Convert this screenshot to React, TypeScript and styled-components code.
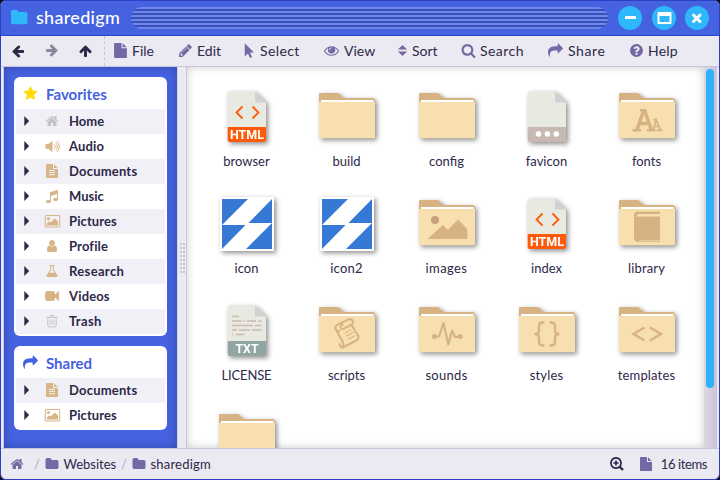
import React from 'react';
import styled, { createGlobalStyle } from 'styled-components';

const GlobalStyle = createGlobalStyle`
  * { box-sizing: border-box; }
  body { margin: 0; background: #0d1026; font-family: Lato, "Liberation Sans", sans-serif; color: #2e2849; }
`;

/* ---------- icons ---------- */

const GLYPHS = {
  folder: 'M1728 608v704q0 92-66 158t-158 66h-1216q-92 0-158-66t-66-158v-960q0-92 66-158t158-66h320q92 0 158 66t66 158v32h672q92 0 158 66t66 158z',
  file: 'M1152 512v-472q22 14 36 28l408 408q14 14 28 36h-472zm-128 32q0 40 28 68t68 28h544v1056q0 40-28 68t-68 28h-1344q-40 0-68-28t-28-68v-1600q0-40 28-68t68-28h800v544z',
  document: 'M1596 476q14 14 28 36h-472v-472q22 14 36 28zm-476 164h544v1056q0 40-28 68t-68 28h-1344q-40 0-68-28t-28-68v-1600q0-40 28-68t68-28h800v544q0 40 28 68t68 28zm160 776v-100q0-20-32-20h-704q-32 0-32 20v100q0 20 32 20h704q32 0 32-20zm0-270v-100q0-20-32-20h-704q-32 0-32 20v100q0 20 32 20h704q32 0 32-20zm0-270v-100q0-20-32-20h-704q-32 0-32 20v100q0 20 32 20h704q32 0 32-20z',
  share: 'M1792 640q0 26-19 45l-512 512q-19 19-45 19t-45-19-19-45v-256h-224q-98 0-175.5 6t-154 21.5-133 42.5-105.5 69.5-80 101-48.5 138.5-17.5 181q0 55 5 123 0 6 2.5 23.5t2.5 26.5q0 15-8.5 25t-23.5 10q-16 0-28-17-7-9-13-22t-13.5-30-10.5-24q-127-285-127-451 0-199 53-333 162-403 875-403h224v-256q0-26 19-45t45-19 45 19l512 512q19 19 19 45z',
  home: 'M1472 992v480q0 26-19 45t-45 19h-384v-384h-256v384h-384q-26 0-45-19t-19-45v-480q0-1 .5-3t.5-3l575-474 575 474q1 2 1 6zm223-69l-62 74q-8 9-21 11h-3q-13 0-21-7l-692-577-692 577q-12 8-24 7-13-2-21-11l-62-74q-8-10-7-23.5t11-21.5l719-599q32-26 76-26t76 26l244 204v-195q0-14 9-23t23-9h192q14 0 23 9t9 23v408l219 182q10 8 11 21.5t-7 23.5z',
  arrow: 'M1664 896v128q0 53-32.5 90.5t-84.5 37.5h-704l293 294q38 36 38 90t-38 90l-75 76q-37 37-90 37-52 0-91-37l-651-652q-37-37-37-90 0-52 37-91l651-650q38-38 91-38 52 0 90 38l75 74q38 38 38 91t-38 91l-293 293h704q52 0 84.5 37.5t32.5 90.5z',
  eye: 'M1664 960q-152-236-381-353 61 104 61 225 0 185-131.5 316.5t-316.5 131.5-316.5-131.5-131.5-316.5q0-121 61-225-229 117-381 353 133 205 333.5 326.5t434.5 121.5 434.5-121.5 333.5-326.5zm-720-384q0-20-14-34t-34-14q-125 0-214.5 89.5t-89.5 214.5q0 20 14 34t34 14 34-14 14-34q0-86 61-147t147-61q20 0 34-14t14-34zm848 384q0 34-20 69-140 230-376.5 368.5t-499.5 138.5-499.5-139-376.5-368q-20-35-20-69t20-69q140-229 376.5-368t499.5-139 499.5 139 376.5 368q20 35 20 69z',
  pencil: 'M491 1536l91-91-235-235-91 91v107h128v128h107zm523-928q0-22-22-22-10 0-17 7l-542 542q-7 7-7 17 0 22 22 22 10 0 17-7l542-542q7-7 7-17zm-54-192l416 416-832 832h-416v-416zm683 96q0 53-37 90l-166 166-416-416 166-165q36-38 90-38 53 0 91 38l235 234q37 39 37 91z',
  search: 'M1216 832q0-185-131.5-316.5t-316.5-131.5-316.5 131.5-131.5 316.5 131.5 316.5 316.5 131.5 316.5-131.5 131.5-316.5zm512 832q0 52-38 90t-90 38q-54 0-90-38l-343-342q-179 124-399 124-143 0-273.5-55.5t-225-150-150-225-55.5-273.5 55.5-273.5 150-225 225-150 273.5-55.5 273.5 55.5 225 150 150 225 55.5 273.5q0 220-124 399l343 343q37 37 37 90z',
  picture: 'M576 576q0 80-56 136t-136 56-136-56-56-136 56-136 136-56 136 56 56 136zm1024 384v448h-1408v-192l320-320 160 160 512-512zm96-704h-1600q-13 0-22.5 9.5t-9.5 22.5v1216q0 13 9.5 22.5t22.5 9.5h1600q13 0 22.5-9.5t9.5-22.5v-1216q0-13-9.5-22.5t-22.5-9.5zm160 32v1216q0 66-47 113t-113 47h-1600q-66 0-113-47t-47-113v-1216q0-66 47-113t113-47h1600q66 0 113 47t47 113z',
  star: 'M1728 647q0 22-26 48l-363 354 86 500q1 7 1 20 0 21-10.5 35.5t-30.5 14.5q-19 0-40-12l-449-236-449 236q-22 12-40 12-21 0-31.5-14.5t-10.5-35.5q0-6 2-20l86-500-364-354q-25-27-25-48 0-37 56-46l502-73 225-455q19-41 49-41t49 41l225 455 502 73q56 9 56 46z',
  video: 'M1792 352v1088q0 42-39 59-13 5-25 5-27 0-45-19l-403-403v166q0 119-84.5 203.5t-203.5 84.5h-704q-119 0-203.5-84.5t-84.5-203.5v-704q0-119 84.5-203.5t203.5-84.5h704q119 0 203.5 84.5t84.5 203.5v165l403-402q18-19 45-19 12 0 25 5 39 17 39 59z',
  user: 'M1536 1399q0 109-62.5 187t-150.5 78h-854q-88 0-150.5-78t-62.5-187q0-85 8.5-160.5t31.5-152 58.5-131 94-89 134.5-34.5q131 128 313 128t313-128q76 0 134.5 34.5t94 89 58.5 131 31.5 152 8.5 160.5zm-256-887q0 159-112.5 271.5t-271.5 112.5-271.5-112.5-112.5-271.5 112.5-271.5 271.5-112.5 271.5 112.5 112.5 271.5z',
  music: 'M1664 224v1120q0 50-34 89t-86 60.5-103.5 32-96.5 10.5-96.5-10.5-103.5-32-86-60.5-34-89 34-89 86-60.5 103.5-32 96.5-10.5q105 0 192 39v-537l-768 237v709q0 50-34 89t-86 60.5-103.5 32-96.5 10.5-96.5-10.5-103.5-32-86-60.5-34-89 34-89 86-60.5 103.5-32 96.5-10.5q105 0 192 39v-967q0-31 19-56.5t49-35.5l832-256q12-4 28-4 40 0 68 28t28 68z',
  help: 'M1024 1376v-192q0-14-9-23t-23-9h-192q-14 0-23 9t-9 23v192q0 14 9 23t23 9h192q14 0 23-9t9-23zm256-672q0-88-55.5-163t-138.5-116-170-41q-243 0-371 213-15 24 8 42l132 100q7 6 19 6 16 0 25-12 53-68 86-92 34-24 86-24 48 0 85.5 26t37.5 59q0 38-20 61t-68 45q-63 28-115.5 86.5t-52.5 125.5v36q0 14 9 23t23 9h192q14 0 23-9t9-23q0-19 21.5-49.5t54.5-49.5q32-18 49-28.5t46-35 44.5-48 28-60.5 12.5-81zm384 192q0 209-103 385.5t-279.5 279.5-385.5 103-385.5-103-279.5-279.5-103-385.5 103-385.5 279.5-279.5 385.5-103 385.5 103 279.5 279.5 103 385.5z',
  pointer: 'M330 30L1430 1130H960L1200 1690L950 1792L710 1240L330 1600Z',
  sort: 'M260 770L896 130L1532 770ZM260 1020L896 1660L1532 1020Z',
  flask: 'M600 128H1192V256H1120V704L1590 1450Q1660 1664 1460 1664H332Q132 1664 202 1450L672 704V256H600ZM800 256V740L560 1130H1232L992 740V256Z',
  caret: 'M680 256L1300 896L680 1536Z',
};

type GlyphName = keyof typeof GLYPHS;

const Svg = styled.svg<{ $size: number; $turn?: number }>`
  display: block;
  flex: none;
  width: ${p => p.$size}px;
  height: ${p => p.$size}px;
  overflow: visible;
  fill: currentColor;
  transform: rotate(${p => p.$turn ?? 0}deg);
`;

function Glyph({ name, size = 15, turn }: { name: GlyphName; size?: number; turn?: number }) {
  const box = name === 'picture' ? '-32 0 1792 1792' : '0 0 1792 1792';
  return (
    <Svg $size={size} $turn={turn} viewBox={box}>
      <path fillRule="evenodd" d={GLYPHS[name]} />
    </Svg>
  );
}

function SpeakerIcon() {
  return (
    <Svg $size={15} viewBox="0 0 15 15">
      <path d="M.5 5H3.3L7.5 1.8V13L3.3 9.8H.5Z" />
      <path d="M9.3 5.3a3 3 0 0 1 0 4.4M10.7 3.6a5.4 5.4 0 0 1 0 7.8M12 2a7.6 7.6 0 0 1 0 11" fill="none" stroke="currentColor" strokeWidth="1" />
    </Svg>
  );
}

function TrashIcon() {
  return (
    <Svg $size={14} viewBox="0 0 14 14">
      <path d="M2.800 4.500V11.500q0 1.500 1.200 1.500H10q1.200 0 1.200-1.500V4.500M1.500 3.500H12.500M4.800 3L5.300 1.500H8.700L9.200 3" fill="none" stroke="currentColor" strokeWidth="1" />
      <path d="M5 5.500V11M7 5.500V11M9 5.500V11" fill="none" stroke="currentColor" strokeWidth=".8" />
    </Svg>
  );
}

/* ---------- window frame ---------- */

const Window = styled.div`
  display: flex;
  flex-direction: column;
  width: 720px;
  height: 480px;
  border: 1px solid #2f3fc6;
  border-radius: 6px;
  background: #ebe9f1;
  overflow: hidden;
`;

const TitleBar = styled.header`
  display: flex;
  align-items: center;
  flex: none;
  height: 35px;
  padding: 0 10px;
  background: #4562e0;
  border-bottom: 1px solid #2f3fc6;
  color: #fff;
`;

const TitleIcon = styled.span`
  width: 25px;
  color: #2eb7fb;
`;

const Title = styled.h1`
  width: 95px;
  margin: 0 0 3px;
  font-size: 18px;
  font-weight: 500;
  line-height: 20px;
  letter-spacing: 0.3px;
`;

const Grip = styled.div`
  flex: 1;
  height: 22px;
  margin-right: 10px;
  border-radius: 11px;
  background: repeating-linear-gradient(#7089e9 0 2px, #3850bd 2px 4px);
`;

const WindowButtons = styled.div`
  display: flex;
  gap: 9.5px;
`;

const RoundButton = styled.button`
  width: 24px;
  height: 24px;
  padding: 0;
  border: 0;
  border-radius: 50%;
  background: #2eb7fb;
`;

/* ---------- toolbar ---------- */

const Toolbar = styled.nav`
  display: flex;
  align-items: stretch;
  flex: none;
  height: 31px;
  border-bottom: 1px solid #c9c4df;
`;

const NavButtons = styled.div`
  display: flex;
  align-items: center;
  width: 104px;
  padding-left: 10px;
  gap: 20px;
  border-right: 1px dashed #c9c4df;
`;

const NavButton = styled.span<{ $dim?: boolean }>`
  width: 14px;
  color: #2e2849;
  opacity: ${p => (p.$dim ? 0.5 : 1)};
`;

const Menu = styled.div`
  display: flex;
  margin-left: 7px;
`;

const MenuButton = styled.span<{ $width: number; $gap: number; $tracking?: number }>`
  display: flex;
  align-items: center;
  gap: ${p => p.$gap}px;
  width: ${p => p.$width}px;
  padding-bottom: 1px;
  font-size: 14px;
  letter-spacing: ${p => p.$tracking ?? 0}px;
  white-space: nowrap;
`;

const MenuIcon = styled.span`
  display: flex;
  justify-content: center;
  width: 16px;
  color: #7569a5;
`;

const menu: { icon: GlyphName; label: string; width: number; gap: number; size?: number; tracking?: number }[] = [
  { icon: 'file', label: 'File', width: 65, gap: 4 },
  { icon: 'pencil', label: 'Edit', width: 64, gap: 4 },
  { icon: 'pointer', label: 'Select', width: 82, gap: 3, tracking: 0.4 },
  { icon: 'eye', label: 'View', width: 71, gap: 5 },
  { icon: 'sort', label: 'Sort', width: 66, gap: 2, size: 13 },
  { icon: 'search', label: 'Search', width: 87, gap: 4, tracking: 0.45 },
  { icon: 'share', label: 'Share', width: 81, gap: 5, tracking: 0.6 },
  { icon: 'help', label: 'Help', width: 60, gap: 4, tracking: 0.2 },
];

/* ---------- sidebar ---------- */

const Body = styled.main`
  display: flex;
  flex: none;
  height: 381px;
  margin: 0 2px;
  border-left: 1px solid #c9c4df;
  border-right: 1px solid #c9c4df;
`;

const Sidebar = styled.aside`
  display: flex;
  flex-direction: column;
  gap: 10px;
  width: 173px;
  padding: 10px;
  background: #4562e0;
  box-shadow: inset 0 0 10px rgba(0, 0, 0, 0.25);
`;

const Panel = styled.section`
  padding: 0 2px 2px;
  border-radius: 6px;
  background: #fff;
`;

const PanelHeader = styled.h2<{ $accent: string }>`
  display: flex;
  align-items: center;
  gap: 8px;
  height: 32px;
  margin: 0;
  padding: 1px 0 0 7px;
  font-size: 15px;
  font-weight: 700;
  color: #4562e0;
  svg { color: ${p => p.$accent}; }
`;

const SideRow = styled.div<{ $tracking?: number }>`
  display: flex;
  align-items: center;
  height: 25px;
  padding: 0 0 1px 3px;
  font-size: 13px;
  font-weight: 700;
  letter-spacing: ${p => p.$tracking ?? 0}px;
  &:nth-child(even) { background: #f1f0f6; }
`;

const SideIcon = styled.span<{ $muted?: boolean }>`
  display: flex;
  justify-content: center;
  width: 34px;
  color: ${p => (p.$muted ? '#c3c2c4' : '#d8b586')};
`;

const Caret = styled.span`
  width: 16px;
`;

type Side = { label: string; icon: React.ReactNode; muted?: boolean; tracking?: number };

const favorites: Side[] = [
  { label: 'Home', icon: <Glyph name="home" size={14} />, muted: true },
  { label: 'Audio', icon: <SpeakerIcon />, tracking: 0.15 },
  { label: 'Documents', icon: <Glyph name="document" size={14} />, tracking: 0.2 },
  { label: 'Music', icon: <Glyph name="music" size={14} /> },
  { label: 'Pictures', icon: <Glyph name="picture" size={14.5} />, tracking: 0.1 },
  { label: 'Profile', icon: <Glyph name="user" size={14} />, tracking: 0.15 },
  { label: 'Research', icon: <Glyph name="flask" size={14} />, tracking: 0.35 },
  { label: 'Videos', icon: <Glyph name="video" size={14} />, tracking: 0.15 },
  { label: 'Trash', icon: <TrashIcon />, muted: true, tracking: 0.35 },
];

const shared: Side[] = [favorites[2], favorites[4]];

function SideList({ title, icon, accent, rows }: { title: string; icon: GlyphName; accent: string; rows: Side[] }) {
  return (
    <Panel>
      <PanelHeader $accent={accent}>
        <Glyph name={icon} size={15} />
        {title}
      </PanelHeader>
      {rows.map(r => (
        <SideRow key={r.label} $tracking={r.tracking}>
          <Caret><Glyph name="caret" size={14} /></Caret>
          <SideIcon $muted={r.muted}>{r.icon}</SideIcon>
          {r.label}
        </SideRow>
      ))}
    </Panel>
  );
}

const Splitter = styled.div`
  display: flex;
  align-items: center;
  justify-content: center;
  width: 10px;
  border-left: 1px solid #d9d6e6;
  border-right: 1px solid #c9c4df;
  background: #ebe9f1;
`;

const SplitterDots = styled.span`
  width: 5px;
  height: 30px;
  background:
    repeating-linear-gradient(90deg, transparent 0 2px, #ebe9f1 2px 3px),
    repeating-linear-gradient(#c6c4cf 0 2px, #ebe9f1 2px 4px);
`;

/* ---------- file grid ---------- */

const Content = styled.div`
  flex: 1;
  padding: 10px 0 0 10px;
  background: #fff;
  overflow: hidden;
  box-shadow: inset 0 0 10px rgba(0, 0, 0, 0.2);
`;

const FileGrid = styled.div`
  display: grid;
  grid-template-columns: repeat(5, 100px);
  grid-auto-rows: 107px;
`;

const FileCell = styled.figure`
  display: flex;
  flex-direction: column;
  align-items: center;
  margin: 0;
  padding-top: 8px;
`;

const FileArt = styled.svg`
  display: block;
  width: 64px;
  height: 64px;
  overflow: visible;
  filter: drop-shadow(2px 2px 2.5px rgba(0, 0, 0, 0.45));
`;

const FileName = styled.figcaption<{ $tracking?: number }>`
  margin-top: 3px;
  padding-right: 1px;
  font-size: 13px;
  line-height: 18px;
  letter-spacing: ${p => p.$tracking ?? 0}px;
`;

const BadgeText = styled.text`
  font: 700 12px Roboto, sans-serif;
  fill: #fff;
  text-anchor: middle;
`;

function Folder({ children }: { children?: React.ReactNode }) {
  return (
    <FileArt viewBox="0 0 64 64">
      <path d="M4 10.500V9Q4 8 5 8H22.500Q23.400 8 24.200 8.700L28.500 13H57.500Q60 13 60 16V20H4Z" fill="#d7b384" />
      <rect x="6" y="15" width="52.500" height="5" fill="#fff" />
      <path d="M4 17H60V52Q60 53.200 58.800 53.200H5.200Q4 53.200 4 52Z" fill="#f8dfaf" />
      {children}
    </FileArt>
  );
}

function Page({ band, children }: { band: string; children?: React.ReactNode }) {
  return (
    <FileArt viewBox="0 0 64 64">
      <path d="M12.700 8.500Q12.700 6.500 14.700 6.500H40L51 17.500V55Q51 57 49 57H14.700Q12.700 57 12.700 55Z" fill="#e8eae1" />
      <path d="M40 6.500L51 17.500H40Z" fill="#d0d1d0" />
      <path d="M12.700 42H51V55Q51 57 49 57H14.700Q12.700 57 12.700 55Z" fill={band} />
      {children}
    </FileArt>
  );
}

const TAN = '#d7b384';

function HtmlFile() {
  return (
    <Page band="#ff5a09">
      <path d="M27.500 21.500L21.500 27.500L27.500 33.500M37.500 21.500L43.500 27.500L37.500 33.500" fill="none" stroke="#ff5a09" strokeWidth="1.800" />
      <BadgeText x="31.900" y="53.800" textLength="34" lengthAdjust="spacingAndGlyphs">HTML</BadgeText>
    </Page>
  );
}

function BoltImage() {
  return (
    <FileArt viewBox="0 0 64 64">
      <rect x="5" y="5" width="54" height="54" fill="#fff" />
      <rect x="7" y="7" width="50" height="50" fill="#3579d4" />
      <path d="M33 7H57L33.500 31H57L31 57H7L30.500 33H7Z" fill="#fff" />
    </FileArt>
  );
}

const folderArt: Record<string, React.ReactNode> = {
  fonts: (
    <g fill="none" stroke={TAN}>
      <path d="M22 45L28.300 26.500M29.500 25L36.500 45M24 38.500H34" strokeWidth="3.600" />
      <path d="M17.500 45.200H26M32 45.200H40.500M25 25.200H31.300" strokeWidth="2.400" />
      <path d="M38.300 45.300L41 34.500L45.300 45.300M39 41.500H44M41.500 45.300H47.500M38.500 34.800H42" strokeWidth="1.700" />
    </g>
  ),
  images: (
    <g fill={TAN}>
      <circle cx="20" cy="28" r="4" fill="#c99f7c" />
      <path d="M12.500 47L28 33L33 38L43 27.500L52.300 37V47Z" />
    </g>
  ),
  library: (
    <>
      <path d="M23 19.500H45V22H24Q22.300 22.300 22.300 24H45V50H23Q19 50 19 46V23.500Q19 19.500 23 19.500Z" fill={TAN} />
      <path d="M45 22.800H24Q21.800 22.800 22 24.200H45M45 48.800H24" stroke="#f8dfaf" fill="none" strokeWidth=".8" />
    </>
  ),
  scripts: (
    <g fill="none" stroke={TAN} strokeWidth="2" strokeLinejoin="round" strokeLinecap="round">
      <path d="M24.500 32.300Q20 31.500 20.300 28.500Q20.500 26.500 23 25.300L33.500 20.300Q37 19.500 38 22.500Q38.300 24.700 36.500 25.700L28.300 30Q25.500 30.500 25.500 28Q25.500 26.500 27.500 25.500" />
      <path d="M22 32.500L28 43.500Q29.500 47.500 26.500 48Q24 47.500 25 45M28 48.500L42 41Q44.500 39 43 36.500L37 27" />
      <path d="M30 34L35.500 31M31.500 37L38 33.500M33.500 40L39.500 36.800" strokeWidth="1.200" />
    </g>
  ),
  sounds: (
    <>
      <path d="M20 37.500H24L28.500 24L33.300 45.500L37 31.500L40 38H45" fill="none" stroke={TAN} strokeWidth="2.200" strokeLinejoin="round" />
      <circle cx="19.500" cy="37.500" r="2.500" fill={TAN} />
      <circle cx="45" cy="37.500" r="2.500" fill={TAN} />
    </>
  ),
  styles: (
    <path d="M29.500 23.500H27.500Q24 23.500 24 27V31.500Q24 35 19.500 35Q24 35 24 38.500V43Q24 46.500 27.500 46.500H29.500M34.500 23.500H36.500Q40 23.500 40 27V31.500Q40 35 44.500 35Q40 35 40 38.500V43Q40 46.500 36.500 46.500H34.500" fill="none" stroke={TAN} strokeWidth="2.300" />
  ),
  templates: (
    <path d="M29.500 28.500L18.500 35L29.500 41.500M35 28.500L46 35L35 41.500" fill="none" stroke={TAN} strokeWidth="2.400" />
  ),
};

const specialArt: Record<string, React.ReactNode> = {
  browser: <HtmlFile />,
  index: <HtmlFile />,
  icon: <BoltImage />,
  icon2: <BoltImage />,
  favicon: (
    <Page band="#c8b9b4">
      <g fill="#fff"><circle cx="23.500" cy="49" r="2.800" /><circle cx="32.400" cy="49" r="2.800" /><circle cx="41.300" cy="49" r="2.800" /></g>
    </Page>
  ),
  LICENSE: (
    <Page band="#91a5a3">
      <path d="M17 17.500H24M17 22H27M28.500 22H30.500M32 22H41M43 22H46.500M17 26.500H38M40 26.500H46.500M17 31H22M24 31H35M37 31H46.500M17 35.500H18.500M21 35.500H29.500" fill="none" stroke="#cbb9b3" strokeWidth="1.600" />
      <BadgeText x="32" y="53.800" textLength="23" lengthAdjust="spacingAndGlyphs">TXT</BadgeText>
    </Page>
  ),
};

const files: { name: string; tracking?: number }[] = [
  { name: 'browser' }, { name: 'build' }, { name: 'config' }, { name: 'favicon' }, { name: 'fonts' },
  { name: 'icon' }, { name: 'icon2', tracking: 0.2 }, { name: 'images', tracking: 0.4 }, { name: 'index' }, { name: 'library', tracking: 0.15 },
  { name: 'LICENSE', tracking: -0.15 }, { name: 'scripts' }, { name: 'sounds', tracking: 0.3 }, { name: 'styles', tracking: 0.15 }, { name: 'templates', tracking: 0.15 },
  { name: '' },
];

const ScrollTrack = styled.div`
  width: 12px;
  padding: 2px;
  background: linear-gradient(90deg, #dcd9e6, #c9c5d8);
`;

const ScrollThumb = styled.div`
  width: 8px;
  height: 319px;
  border-radius: 4px;
  background: #2eb3f8;
`;

/* ---------- status bar ---------- */

const StatusBar = styled.footer`
  display: flex;
  align-items: center;
  flex: 1;
  padding: 0 12px 0 9px;
  border-top: 1px solid #c9c4df;
  font-size: 13px;
`;

const Crumb = styled.span<{ $width: number; $tracking?: number }>`
  display: flex;
  align-items: center;
  gap: 4.5px;
  width: ${p => p.$width}px;
  letter-spacing: ${p => p.$tracking ?? 0}px;
  white-space: nowrap;
  svg { color: #7569a5; }
`;

const Slash = styled.span<{ $width: number }>`
  width: ${p => p.$width}px;
  color: #aaa5c4;
`;

const Zoom = styled.span`
  margin-left: auto;
  margin-right: 15px;
`;

const ItemCount = styled.span`
  display: flex;
  align-items: center;
  gap: 8px;
  letter-spacing: -0.4px;
  svg { color: #7569a5; }
`;

export default function App() {
  return (
    <>
      <GlobalStyle />
      <Window>
        <TitleBar>
          <TitleIcon>
            <Svg $size={17} viewBox="0 0 17 17"><path d="M0 1.500Q0 0 1.500 0H5.500Q7 0 7.500 2H14.500Q16.500 2 16.500 4V12.500Q16.500 14.200 14.500 14.200H2Q0 14.200 0 12.500Z" /></Svg>
          </TitleIcon>
          <Title>sharedigm</Title>
          <Grip />
          <WindowButtons>
            <RoundButton>
              <Svg $size={24} viewBox="0 0 24 24"><rect x="7" y="10" width="11" height="3" rx=".5" fill="#fff" /></Svg>
            </RoundButton>
            <RoundButton>
              <Svg $size={24} viewBox="0 0 24 24"><path d="M6.500 6H18.500Q19.500 6 19.500 7V17Q19.500 18 18.500 18H6.500Q5.500 18 5.500 17V7Q5.500 6 6.500 6ZM7.500 10V16H17.500V10Z" fill="#fff" fillRule="evenodd" /></Svg>
            </RoundButton>
            <RoundButton>
              <Svg $size={24} viewBox="0 0 24 24"><path d="M8.500 9L15 15.500M15 9L8.500 15.500" stroke="#fff" strokeWidth="3" strokeLinecap="round" /></Svg>
            </RoundButton>
          </WindowButtons>
        </TitleBar>

        <Toolbar>
          <NavButtons>
            <NavButton><Glyph name="arrow" size={14} /></NavButton>
            <NavButton $dim><Glyph name="arrow" size={14} turn={180} /></NavButton>
            <NavButton><Glyph name="arrow" size={14} turn={90} /></NavButton>
          </NavButtons>
          <Menu>
            {menu.map(m => (
              <MenuButton key={m.label} $width={m.width} $gap={m.gap} $tracking={m.tracking}>
                <MenuIcon><Glyph name={m.icon} size={m.size} /></MenuIcon>
                {m.label}
              </MenuButton>
            ))}
          </Menu>
        </Toolbar>

        <Body>
          <Sidebar>
            <SideList title="Favorites" icon="star" accent="#ffdc0a" rows={favorites} />
            <SideList title="Shared" icon="share" accent="#4562e0" rows={shared} />
          </Sidebar>
          <Splitter><SplitterDots /></Splitter>
          <Content>
            <FileGrid>
              {files.map(f => (
                <FileCell key={f.name}>
                  {specialArt[f.name] ?? <Folder>{folderArt[f.name]}</Folder>}
                  {f.name && <FileName $tracking={f.tracking}>{f.name}</FileName>}
                </FileCell>
              ))}
            </FileGrid>
          </Content>
          <ScrollTrack><ScrollThumb /></ScrollTrack>
        </Body>

        <StatusBar>
          <Crumb $width={24}><Glyph name="home" size={14} /></Crumb>
          <Slash $width={11}>/</Slash>
          <Crumb $width={76}><Glyph name="folder" size={14} />Websites</Crumb>
          <Slash $width={11}>/</Slash>
          <Crumb $width={90} $tracking={0.2}><Glyph name="folder" size={14} />sharedigm</Crumb>
          <Zoom>
            <Svg $size={14} viewBox="0 0 14 14">
              <path d="M9.500 9.500L13 13" stroke="currentColor" strokeWidth="2.400" />
              <path d="M6 .9a5.100 5.100 0 1 0 .01 0ZM6 3.500V8.500M3.500 6H8.500" fill="none" stroke="currentColor" strokeWidth="1.700" />
            </Svg>
          </Zoom>
          <ItemCount><Glyph name="file" size={14} />16 items</ItemCount>
        </StatusBar>
      </Window>
    </>
  );
}
